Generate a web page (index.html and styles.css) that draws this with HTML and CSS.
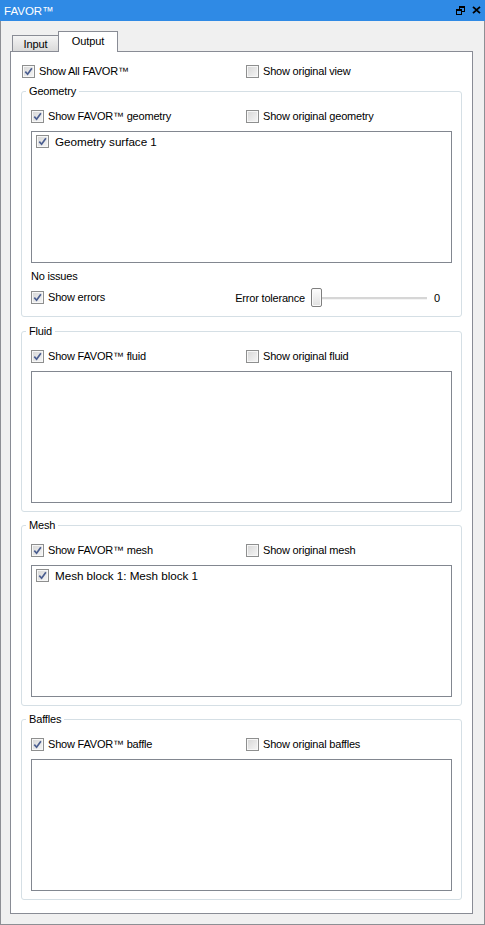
FILE: index.html
```html
<!DOCTYPE html>
<html>
<head>
<meta charset="utf-8">
<link rel="stylesheet" href="styles.css">
</head>
<body>
<div class="window">
  <div class="titlebar">
    <span class="title">FAVOR™</span>
    <div class="tb-icons">
      <svg class="ico" width="9" height="9" viewBox="0 0 9 9">
        <path d="M3 0h6v6h-6z M4 2v3h4v-3z" fill-rule="evenodd" fill="#000"/>
        <rect x="0" y="3" width="6" height="6" fill="#2f8ae5"/>
        <path d="M0 3h6v6h-6z M1 5v3h4v-3z" fill-rule="evenodd" fill="#000"/>
      </svg>
      <svg class="ico" width="9" height="8" viewBox="0 0 9 8">
        <path d="M1 0.8l7 6.4M8 0.8l-7 6.4" stroke="#000" stroke-width="1.8" fill="none"/>
      </svg>
    </div>
  </div>
  <div class="main">
    <div class="tabs">
      <div class="tab tab-input">Input</div>
      <div class="tab tab-output">Output</div>
    </div>
    <div class="pane">
      <div class="row2 top-row">
        <label class="chk"><span class="cb"><svg width="9" height="9" viewBox="0 0 9 9"><path d="M1.3 4.6L3.6 7.2L7.9 1.2" stroke="#4b5e90" stroke-width="1.7" fill="none"/></svg></span>Show All FAVOR™</label>
        <label class="chk"><span class="cb"></span>Show original view</label>
      </div>

      <fieldset class="group">
        <legend>Geometry</legend>
        <div class="row2">
          <label class="chk"><span class="cb"><svg width="9" height="9" viewBox="0 0 9 9"><path d="M1.3 4.6L3.6 7.2L7.9 1.2" stroke="#4b5e90" stroke-width="1.7" fill="none"/></svg></span>Show FAVOR™ geometry</label>
          <label class="chk"><span class="cb"></span>Show original geometry</label>
        </div>
        <div class="list">
          <div class="item"><span class="cb"><svg width="9" height="9" viewBox="0 0 9 9"><path d="M1.3 4.6L3.6 7.2L7.9 1.2" stroke="#4b5e90" stroke-width="1.7" fill="none"/></svg></span><span class="item-text">Geometry surface 1</span></div>
        </div>
        <div class="status">No issues</div>
        <div class="err-row">
          <label class="chk"><span class="cb"><svg width="9" height="9" viewBox="0 0 9 9"><path d="M1.3 4.6L3.6 7.2L7.9 1.2" stroke="#4b5e90" stroke-width="1.7" fill="none"/></svg></span>Show errors</label>
          <div class="tol">
            <span class="tol-label">Error tolerance</span>
            <div class="slider"><span class="handle"></span><span class="track"></span></div>
            <span class="val">0</span>
          </div>
        </div>
      </fieldset>

      <fieldset class="group group-gap">
        <legend>Fluid</legend>
        <div class="row2">
          <label class="chk"><span class="cb"><svg width="9" height="9" viewBox="0 0 9 9"><path d="M1.3 4.6L3.6 7.2L7.9 1.2" stroke="#4b5e90" stroke-width="1.7" fill="none"/></svg></span>Show FAVOR™ fluid</label>
          <label class="chk"><span class="cb"></span>Show original fluid</label>
        </div>
        <div class="list"></div>
      </fieldset>

      <fieldset class="group">
        <legend>Mesh</legend>
        <div class="row2">
          <label class="chk"><span class="cb"><svg width="9" height="9" viewBox="0 0 9 9"><path d="M1.3 4.6L3.6 7.2L7.9 1.2" stroke="#4b5e90" stroke-width="1.7" fill="none"/></svg></span>Show FAVOR™ mesh</label>
          <label class="chk"><span class="cb"></span>Show original mesh</label>
        </div>
        <div class="list">
          <div class="item"><span class="cb"><svg width="9" height="9" viewBox="0 0 9 9"><path d="M1.3 4.6L3.6 7.2L7.9 1.2" stroke="#4b5e90" stroke-width="1.7" fill="none"/></svg></span><span class="item-text">Mesh block 1: Mesh block 1</span></div>
        </div>
      </fieldset>

      <fieldset class="group">
        <legend>Baffles</legend>
        <div class="row2">
          <label class="chk"><span class="cb"><svg width="9" height="9" viewBox="0 0 9 9"><path d="M1.3 4.6L3.6 7.2L7.9 1.2" stroke="#4b5e90" stroke-width="1.7" fill="none"/></svg></span>Show FAVOR™ baffle</label>
          <label class="chk"><span class="cb"></span>Show original baffles</label>
        </div>
        <div class="list"></div>
      </fieldset>
    </div>
  </div>
</div>
</body>
</html>
```
FILE: styles.css
```css
html, body {
  margin: 0;
  padding: 0;
}
body {
  font-family: "Liberation Sans", Arial, sans-serif;
  font-size: 11px;
  color: #000;
  background: #f0f0f0;
}
.window {
  width: 485px;
  height: 925px;
  display: flex;
  flex-direction: column;
  box-sizing: border-box;
}
.titlebar {
  flex: none;
  height: 21px;
  box-sizing: border-box;
  background: #2f8ae5;
  display: flex;
  align-items: center;
  padding: 0 4px 0 4px;
  color: #fff;
}
.title {
  font-size: 11.5px;
  line-height: 14px;
}
.tb-icons {
  margin-left: auto;
  display: flex;
  align-items: center;
  gap: 7px;
  margin-top: -1px;
}
.ico {
  display: block;
}
.main {
  flex: 1;
  min-height: 0;
  background: #f0f0f0;
  border: 1px solid #8d8f94;
  border-top: none;
  padding: 10px 11px 10px 9px;
  display: flex;
  flex-direction: column;
}
.tabs {
  flex: none;
  height: 20px;
  display: flex;
  align-items: flex-end;
  padding-left: 2px;
  letter-spacing: -0.1px;
}
.tab {
  box-sizing: border-box;
  border: 1px solid #898c95;
  border-bottom: none;
  display: flex;
  align-items: center;
  justify-content: center;
  line-height: 13px;
}
.tab-input {
  width: 46px;
  height: 16px;
  border-right: none;
  background: linear-gradient(#f4f4f4, #dadada);
  padding-top: 1px;
}
.tab-output {
  width: 60px;
  height: 21px;
  background: #fff;
  margin-bottom: -1px;
  position: relative;
  z-index: 1;
  padding-bottom: 1px;
}
.pane {
  flex: 1;
  min-height: 0;
  background: #fff;
  border: 1px solid #898c95;
  padding: 13px 10px 0 10px;
  display: flex;
  flex-direction: column;
}
.row2 {
  display: grid;
  grid-template-columns: 215px 1fr;
  height: 13px;
}
.top-row {
  grid-template-columns: 224px 1fr;
  padding-left: 1px;
}
.chk {
  display: flex;
  align-items: center;
  gap: 4px;
  line-height: 13px;
  white-space: nowrap;
  letter-spacing: -0.2px;
}
.cb {
  flex: none;
  width: 13px;
  height: 13px;
  box-sizing: border-box;
  border: 1px solid #8e8f8f;
  background: linear-gradient(135deg, #d6d6d6 0%, #f6f6f6 100%);
  box-shadow: inset 0 0 0 1px #f7f7f7;
  display: flex;
  align-items: center;
  justify-content: center;
}
.cb svg {
  display: block;
}
.group {
  margin: 6px 0 0 0;
  padding: 12px 9px 8px 9px;
  border: 1px solid #d5dfe5;
  border-radius: 3px;
  min-width: 0;
}
.group-gap {
  margin-top: 7px;
}
.group legend {
  padding: 0 3px;
  margin-left: -5px;
  line-height: 14px;
  letter-spacing: -0.15px;
}
.list {
  margin-top: 8px;
  height: 132px;
  box-sizing: border-box;
  border: 1px solid #828790;
  background: #fff;
  padding: 3px 4px;
}
.item {
  display: flex;
  align-items: center;
  gap: 6px;
  height: 13px;
}
.item-text {
  font-size: 11.7px;
  line-height: 13px;
  letter-spacing: -0.05px;
}
.status {
  margin-top: 6px;
  line-height: 14px;
  letter-spacing: -0.2px;
}
.err-row {
  margin-top: 5px;
  height: 19px;
  display: flex;
  align-items: center;
  margin-bottom: 1px;
}
.tol {
  margin-left: auto;
  display: flex;
  align-items: center;
}
.tol-label {
  letter-spacing: -0.2px;
}
.slider {
  width: 116px;
  height: 19px;
  margin-left: 6px;
  display: flex;
  align-items: center;
}
.handle {
  flex: none;
  width: 11px;
  height: 19px;
  box-sizing: border-box;
  border: 1px solid #7f7f7f;
  border-radius: 2px;
  background: linear-gradient(#fdfdfd, #e0e0e0);
  box-shadow: inset 0 0 0 1px #fafafa;
}
.track {
  flex: 1;
  height: 2px;
  background: #d6d6d6;
  border-bottom: 1px solid #f4f4f4;
  margin-top: 1px;
}
.val {
  width: 18px;
  margin-left: 7px;
}
```
